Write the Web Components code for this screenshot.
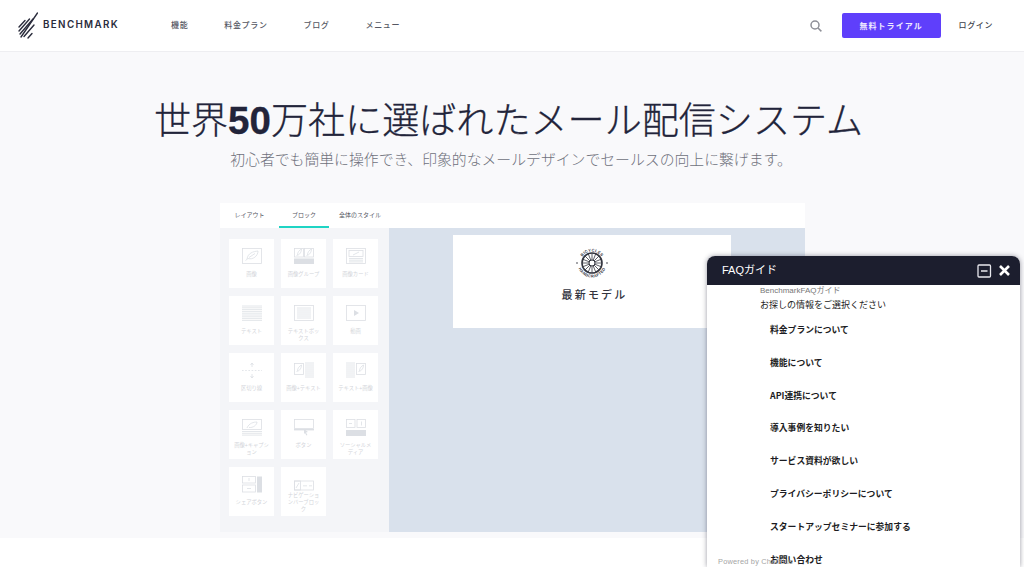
<!DOCTYPE html>
<html lang="ja">
<head>
<meta charset="utf-8">
<title>Benchmark</title>
<style>
	html, body {
		margin: 0;
		height: 567px;
		overflow: hidden;
		background: #fff;
		font-family: "Noto Sans CJK JP", "Noto Sans", sans-serif;
	}
</style>
</head>
<body>
<bm-header></bm-header>
<bm-hero>
	<bm-editor></bm-editor>
</bm-hero>
<faq-chat>
	<faq-item>料金プランについて</faq-item>
	<faq-item>機能について</faq-item>
	<faq-item>API連携について</faq-item>
	<faq-item>導入事例を知りたい</faq-item>
	<faq-item>サービス資料が欲しい</faq-item>
	<faq-item>プライバシーポリシーについて</faq-item>
	<faq-item>スタートアップセミナーに参加する</faq-item>
	<faq-item>お問い合わせ</faq-item>
</faq-chat>

<script>
class BmHeader extends HTMLElement {
	constructor() {
		super();
		this.attachShadow({mode: 'open'}).innerHTML = `
			<style>
				:host {
					display: flex;
					align-items: center;
					height: 52px;
					box-sizing: border-box;
					padding: 0 31px 0 18px;
					background: #fff;
					border-bottom: 1px solid #eeeef1;
					color: #555762;
				}
				.logo { display: flex; align-items: center; width: 153px; color: #2a2c3c; }
				.logo span {
					font: 600 9.8px "Inter", "Liberation Sans", sans-serif;
					letter-spacing: 1.35px;
					margin-left: 5px;
					padding-bottom: 2px;
				}
				nav { display: flex; gap: 36px; font-size: 8px; font-weight: 500; letter-spacing: 0.65px; padding-bottom: 2px; }
				.right { margin-left: auto; display: flex; align-items: center; }
				.search { display: block; margin-right: 20px; }
				button {
					width: 99px;
					height: 25px;
					margin-right: 18px;
					border: 0;
					border-radius: 2px;
					background: #5f3ffb;
					color: #efeaff;
					font: 700 8px "Noto Sans CJK JP", sans-serif;
					letter-spacing: 1.05px;
				}
				.login { font-size: 8px; font-weight: 500; letter-spacing: 0.6px; color: #3d3f4b; padding-bottom: 2px; }
			</style>
			<div class="logo">
				<svg width="20" height="27" viewBox="0 0 20 27" fill="none" stroke="currentColor" stroke-width="1.4" stroke-linecap="round">
					<path d="M1 15 L7 8.5"/>
					<path d="M1 19 L11.5 7"/>
					<path d="M2 22 L15 7"/>
					<path d="M3 25 L19.5 1"/>
					<path d="M6 24.5 L16 13"/>
					<path d="M10 26 L14 21.5"/>
				</svg>
				<span>BENCHMARK</span>
			</div>
			<nav>
				<span>機能</span>
				<span>料金プラン</span>
				<span>ブログ</span>
				<span>メニュー</span>
			</nav>
			<div class="right">
				<svg class="search" width="12" height="12" viewBox="0 0 12 12" fill="none" stroke="#8e8f97" stroke-width="1.5">
					<circle cx="5" cy="5" r="4"/>
					<path d="M8 8 L11.4 11.4"/>
				</svg>
				<button>無料トライアル</button>
				<span class="login">ログイン</span>
			</div>
		`;
	}
}

class BmHero extends HTMLElement {
	constructor() {
		super();
		this.attachShadow({mode: 'open'}).innerHTML = `
			<style>
				:host {
					display: flex;
					flex-direction: column;
					align-items: center;
					height: 486px;
					box-sizing: border-box;
					padding-top: 41px;
					background: #f9f9fb;
				}
				h1 {
					margin: 0 7px 0 0;
					font-size: 37.1px;
					line-height: 50px;
					font-weight: 300;
					-webkit-text-stroke: 0.3px #22243a;
					color: #22243a;
					white-space: nowrap;
				}
				b { font: 700 38.5px "Liberation Sans", sans-serif; }
				p {
					margin: 4px 2px 0 0;
					font-size: 14.85px;
					line-height: 24px;
					font-weight: 300;
					color: #6f717c;
					white-space: nowrap;
				}
				.stage { margin-top: 32px; margin-left: 1px; }
			</style>
			<h1>世界<b>50</b>万社に選ばれたメール配信システム</h1>
			<p>初心者でも簡単に操作でき、印象的なメールデザインでセールスの向上に繋げます。</p>
			<div class="stage"><slot></slot></div>
		`;
	}
}

class BmEditor extends HTMLElement {
	constructor() {
		super();
		const tiles = [
			['image', '画像'],
			['group', '画像グループ'],
			['card', '画像カード'],
			['text', 'テキスト'],
			['textbox', 'テキストボックス'],
			['video', '動画'],
			['divider', '区切り線'],
			['imgtext', '画像+テキスト'],
			['textimg', 'テキスト+画像'],
			['caption', '画像+キャプション'],
			['button', 'ボタン'],
			['social', 'ソーシャルメディア'],
			['share', 'シェアボタン'],
			['navbar', 'ナビゲーションバーブロック']
		];
		this.attachShadow({mode: 'open'}).innerHTML = `
			<style>
				:host { display: block; width: 585px; height: 329px; }
				.tabs {
					display: flex;
					height: 25px;
					background: #fff;
					font-size: 6px;
					color: #55575f;
				}
				.tabs span { display: flex; align-items: center; justify-content: center; box-sizing: border-box; padding-bottom: 2px; }
				.tabs span:nth-child(1) { width: 59px; }
				.tabs span:nth-child(2) { width: 50px; border-bottom: 2px solid #1fd4c4; padding-bottom: 0; }
				.tabs span:nth-child(3) { margin-left: 10px; }
				.body { display: flex; height: 304px; }
				.panel {
					width: 169px;
					box-sizing: border-box;
					padding: 11px 0 0 9px;
					background: #f4f5f8;
					display: grid;
					grid-template-columns: repeat(3, 45px);
					grid-auto-rows: 49px;
					column-gap: 7px;
					row-gap: 8px;
				}
				.canvas { flex: 1; padding: 7px 0 0 64px; background: #d9e1ec; }
				.card {
					width: 278px;
					height: 93px;
					background: #fff;
					display: flex;
					flex-direction: column;
					align-items: center;
					padding-top: 11px;
					box-sizing: border-box;
				}
				.card div {
					margin: 6px 0 0 5px;
					font-size: 11px;
					line-height: 16px;
					font-weight: 500;
					letter-spacing: 2.2px;
					color: #33353f;
				}
				.card text { font: 700 4px "Liberation Sans", sans-serif; letter-spacing: 0.3px; fill: #33353f; }
			</style>
			<div class="tabs">
				<span>レイアウト</span>
				<span>ブロック</span>
				<span>全体のスタイル</span>
			</div>
			<div class="body">
				<div class="panel">
					${tiles.map(t => `<bm-tile icon="${t[0]}">${t[1]}</bm-tile>`).join('')}
				</div>
				<div class="canvas">
					<div class="card">
						<svg width="34" height="34" viewBox="0 0 34 34" fill="none" stroke="#33353f">
							<defs>
								<path id="arcTop" d="M5.5 17 A11.5 11.5 0 0 1 28.5 17"/>
								<path id="arcBot" d="M2.5 17 A14.5 14.5 0 0 0 31.5 17"/>
							</defs>
							<circle cx="17" cy="17" r="10" stroke-width="1.6"/>
							<circle cx="17" cy="17" r="3" stroke-width="1"/>
							<path stroke-width="0.8" d="M17 7V14M17 20V27M7 17H14M20 17H27M10 10L15 15M19 19L24 24M24 10L19 15M15 19L10 24M13.2 7.7L15.8 14.2M18.2 19.8L20.8 26.3M20.8 7.7L18.2 14.2M15.8 19.8L13.2 26.3M7.7 13.2L14.2 15.8M19.8 18.2L26.3 20.8M7.7 20.8L14.2 18.2M19.8 15.8L26.3 13.2"/>
							<circle cx="2" cy="17" r="0.8" fill="#33353f" stroke="none"/>
							<circle cx="32" cy="17" r="0.8" fill="#33353f" stroke="none"/>
							<text stroke="none"><textPath href="#arcTop" startOffset="50%" text-anchor="middle">BICYCLES</textPath></text>
							<text stroke="none"><textPath href="#arcBot" startOffset="50%" text-anchor="middle">HANDCRAFTED</textPath></text>
						</svg>
						<div>最新モデル</div>
					</div>
				</div>
			</div>
		`;
	}
}

class BmTile extends HTMLElement {
	constructor() {
		super();
		this.attachShadow({mode: 'open'});
	}

	connectedCallback() {
		this.shadowRoot.innerHTML = `
			<style>
				:host {
					display: flex;
					flex-direction: column;
					align-items: center;
					background: #fff;
					color: #dcdfe4;
					box-sizing: border-box;
					padding-top: 9px;
				}
				:host([icon="navbar"]) div { margin-top: -1px; }
				svg { display: block; flex: none; }
				div {
					margin-top: 6px;
					width: 36.5px;
					font-size: 5.3px;
					line-height: 7.2px;
					text-align: center;
					color: #d3d5da;
					word-break: break-all;
				}
			</style>
			<svg width="20" height="17" viewBox="0 0 20 17" fill="none" stroke="currentColor" stroke-width="0.8">${this.icon()}</svg>
			<div><slot></slot></div>
		`;
	}

	icon() {
		const leaf = 'M3.5 12.5 L6 10.5 M5 11 C6 5 11 3.5 16 3 C16 8 11 12 6 10.5 M7 9.5 L13 5.5';
		const small = (x, y) => `<path d="M${x} ${y + 7} L${x + 1} ${y + 6} C${x + 1} ${y + 3} ${x + 3} ${y + 1} ${x + 5} ${y} C${x + 5} ${y + 3} ${x + 3} ${y + 6} ${x + 1} ${y + 6}"/>`;
		const lines = (x, y, w, n, step) => {
			let d = '';
			for (let i = 0; i < n; i++) {
				d += `M${x} ${y + i * step}h${w}`;
			}
			return `<path d="${d}"/>`;
		};
		switch (this.getAttribute('icon')) {
			case 'image':
				return `<rect x="0.5" y="0.5" width="19" height="15"/><path d="${leaf}"/>`;
			case 'group':
				return `<rect x="0.5" y="0.5" width="9" height="8.5"/><rect x="10.5" y="0.5" width="9" height="8.5"/>
					${small(2.5, 1)}${small(12.5, 1)}<rect x="0" y="10.5" width="20" height="5.5" fill="currentColor" stroke="none"/>`;
			case 'card':
				return `<rect x="0.5" y="0.5" width="19" height="15"/><rect x="3" y="2.5" width="14" height="6"/>
					<path d="M7 7 L13 4"/>${lines(3, 10.5, 14, 3, 1.7)}`;
			case 'text':
				return lines(0, 1, 20, 9, 1.8);
			case 'textbox':
				return `<rect x="0.5" y="0.5" width="19" height="15"/>${lines(3, 3, 14, 6, 2)}`;
			case 'video':
				return `<rect x="0.5" y="0.5" width="19" height="15"/><path d="M8 5 L13 8 L8 11Z" fill="currentColor" stroke="none"/>`;
			case 'divider':
				return `<path d="M10 1V5M8.5 3L10 1L11.5 3M10 12V16M8.5 14L10 16L11.5 14"/><path d="M0 8.5H20" stroke-dasharray="1.6 1.6"/>`;
			case 'imgtext':
				return `<rect x="0.5" y="1.5" width="9" height="11"/>${small(2.5, 3)}${lines(11, 1, 9, 8, 2)}`;
			case 'textimg':
				return `${lines(0, 1, 9, 8, 2)}<rect x="10.5" y="1.5" width="9" height="11"/>${small(12.5, 3)}`;
			case 'caption':
				return `<rect x="0.5" y="0.5" width="19" height="10"/><path d="M5 9 C7 4 12 3 15 3 C15 6 11 9 7 8.5"/>${lines(0, 12.5, 20, 3, 1.8)}`;
			case 'button':
				return `<rect x="0.5" y="0.5" width="19" height="9"/><rect x="0" y="10" width="20" height="1.4" fill="currentColor" stroke="none"/><path d="M10 10 L14 13 L12 13.4 L13.4 16 L12.4 16.4 L11 14 L10 15Z" fill="currentColor" stroke="none"/>`;
			case 'social':
				return `<rect x="0.5" y="0.5" width="8.5" height="8"/><rect x="11" y="0.5" width="8.5" height="8"/>
					<path d="M3 4.5h3M15.5 2.5v4"/><rect x="0" y="11" width="20" height="6" fill="currentColor" stroke="none"/>`;
			case 'share':
				return `<rect x="0.5" y="0.5" width="13" height="6.5"/><rect x="0.5" y="9" width="13" height="7"/>
					<path d="M7 2v3M5 12.5h4"/><rect x="15" y="0.5" width="5" height="16" fill="currentColor" stroke="none"/>`;
			case 'navbar':
				return `<rect x="0.5" y="5" width="19" height="9"/><rect x="0.5" y="5" width="6" height="9"/><path d="M2 12 L5 7M9 9.8h4M15 9.8h3"/>`;
		}
		return '';
	}
}

class FaqChat extends HTMLElement {
	constructor() {
		super();
		this.attachShadow({mode: 'open'}).innerHTML = `
			<style>
				:host {
					position: absolute;
					left: 707px;
					top: 256px;
					width: 313px;
					height: 311px;
					overflow: hidden;
					border-radius: 8px 8px 0 0;
					background: #fff;
					box-shadow: 0 0 5px rgba(30, 32, 50, 0.45);
					font-family: "Noto Sans CJK JP", sans-serif;
				}
				header {
					display: flex;
					align-items: center;
					height: 29px;
					padding: 0 9px 0 15px;
					background: #1c1e2e;
					color: #fff;
					font: 11px/29px "Liberation Sans", "Noto Sans CJK JP", sans-serif;
				}
				header span { margin-right: auto; }
				header svg { display: block; }
				.sender { margin: 0 0 0 53px; font: 8px/10px "Liberation Sans", "Noto Sans CJK JP", sans-serif; color: #777; padding-top: 1px; }
				.lead { margin: 2px 0 0 53px; font-size: 9px; line-height: 13px; color: #222; }
				.list { display: flex; flex-direction: column; gap: 20.8px; margin: 13px 0 0 63px; }
				.powered {
					position: absolute;
					left: 11px;
					top: 301px;
					font: 7.4px/10px "Liberation Sans", sans-serif;
					letter-spacing: 0.2px;
					color: #a5a5a5;
				}
			</style>
			<header>
				<span>FAQガイド</span>
				<svg width="15" height="14" viewBox="0 0 15 14" fill="none" stroke="#e9e9ee" stroke-width="1.3" style="margin-right:6px">
					<rect x="1" y="1" width="12.5" height="12" rx="1"/>
					<path d="M4 7H10.5" stroke-width="1.6"/>
				</svg>
				<svg width="13" height="13" viewBox="0 0 13 13" fill="none" stroke="#fff" stroke-width="2.6">
					<path d="M2 2L11 11M11 2L2 11"/>
				</svg>
			</header>
			<div class="sender">BenchmarkFAQガイド</div>
			<div class="lead">お探しの情報をご選択ください</div>
			<div class="list"><slot></slot></div>
			<div class="powered">Powered by ChatPlus</div>
		`;
	}
}

class FaqItem extends HTMLElement {
	constructor() {
		super();
		this.attachShadow({mode: 'open'}).innerHTML = `
			<style>
				:host {
					display: block;
					font-size: 8.8px;
					line-height: 12px;
					font-weight: 700;
					color: #1c1c22;
					white-space: nowrap;
				}
			</style>
			<slot></slot>
		`;
	}
}

customElements.define('bm-header', BmHeader);
customElements.define('bm-hero', BmHero);
customElements.define('bm-tile', BmTile);
customElements.define('bm-editor', BmEditor);
customElements.define('faq-chat', FaqChat);
customElements.define('faq-item', FaqItem);
</script>
</body>
</html>
